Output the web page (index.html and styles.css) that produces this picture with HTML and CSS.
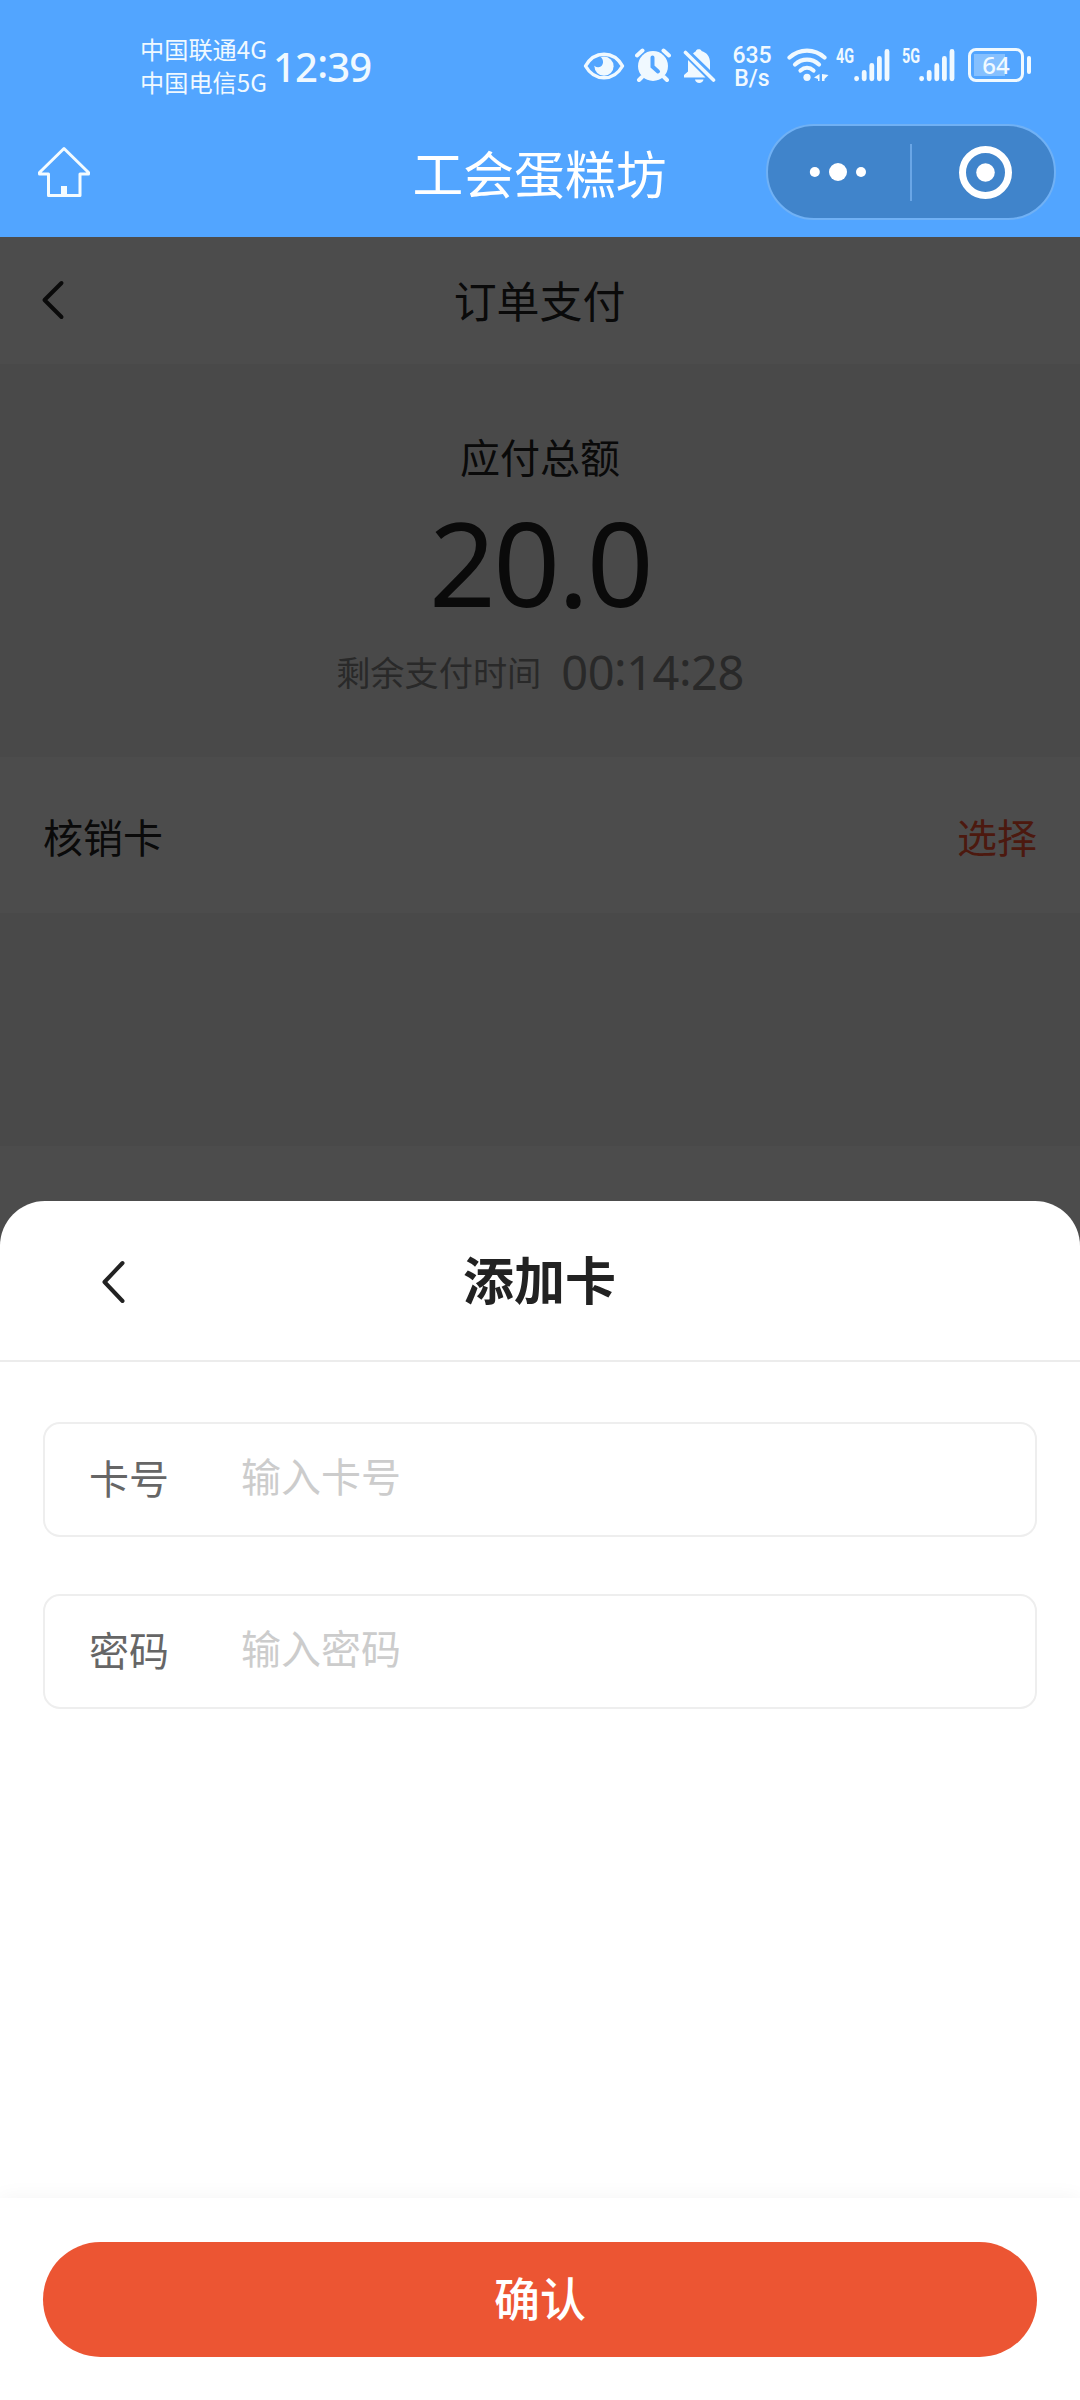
FILE: index.html
```html
<!DOCTYPE html>
<html lang="zh-CN">
<head>
<meta charset="utf-8">
<title>工会蛋糕坊</title>
<link rel="stylesheet" href="styles.css">
</head>
<body>
<div class="screen">
  <header class="topbar">
    <div class="status">
      <div class="carriers"><span>中国联通4G</span><span>中国电信5G</span></div>
      <div class="clock">12<i class="colon">:</i>39</div>
      <div class="status-icons">
        <svg class="eye" width="42" height="30" viewBox="0 0 42 30"><path d="M2.500 15C7 7 14 3.200 21 3.200S35 7 39.500 15C35 23 28 26.800 21 26.800S7 23 2.500 15Z" fill="none" stroke="#f0f9ff" stroke-width="3.400" stroke-linejoin="round"/><circle cx="21" cy="15.200" r="9.600" fill="#f0f9ff"/><path d="M11 9.500 17 5.500C21.500 8.500 21 15.500 15.500 16.200C13 16.500 11 15 9.500 13Z" fill="#52a5ff"/></svg>
        <svg class="alarm" width="36" height="34" viewBox="0 0 36 34"><circle cx="18" cy="18" r="15" fill="#f0f9ff"/><path d="M2 7.500 7.500 2.500M28.500 2.500 34 7.500M7 29 4 32M29 29 32 32" stroke="#f0f9ff" stroke-width="4" stroke-linecap="round"/><path d="M17.500 9.500V18.500L23 23.500" fill="none" stroke="#52a5ff" stroke-width="4" stroke-linecap="round"/></svg>
        <svg class="bell" width="33" height="36" viewBox="0 0 33 36"><path d="M5 12 22.500 29.500H1V27L5 23.500ZM10 5.500C11.500 4 12.500 3.500 13 3C13 .5 18.500 .5 18.500 3C24 4.500 27 9 27 14V22ZM12 31.500H20.500C20 36 12.500 36 12 31.500Z" fill="#f0f9ff"/><path d="M2.500 4.500 30.500 32" stroke="#f0f9ff" stroke-width="3.600" stroke-linecap="round"/></svg>
        <div class="speed"><span>635</span><span>B/s</span></div>
        <svg class="wifi" width="42" height="34" viewBox="0 0 42 34"><g fill="none" stroke="#f0f9ff" stroke-width="4.200" stroke-linecap="round"><path d="M2.500 9.500C12.500 .200 27.500 .200 37.500 9.500"/><path d="M8 16.500C15 10 25 10 32 16.500"/><path d="M13.500 22.500C17.500 19 22.500 19 26.500 22.500"/></g><circle cx="20" cy="29.300" r="3.600" fill="#f0f9ff"/><path d="M32.500 26V33H31V31L27 29.500ZM35 26 41.500 27 37.500 31V33H35Z" fill="#f0f9ff"/></svg>
        <span class="net net-4g">4G</span>
        <svg class="bars" width="36" height="34" viewBox="0 0 36 34"><path d="M2.600 30.300V30.800M10.200 24.500V30.800M17.800 17.500V30.800M25.400 10.500V30.800M33 3.500V30.800" stroke="#f0f9ff" stroke-width="4.800" stroke-linecap="round"/></svg>
        <span class="net net-5g">5G</span>
        <svg class="bars" width="36" height="34" viewBox="0 0 36 34"><path d="M2.600 30.300V30.800M10.200 24.500V30.800M17.800 17.500V30.800M25.400 10.500V30.800M33 3.500V30.800" stroke="#f0f9ff" stroke-width="4.800" stroke-linecap="round"/></svg>
        <div class="battery"><span>64</span></div><div class="nub"></div>
      </div>
    </div>
    <div class="appbar">
      <svg class="home" width="54" height="54" viewBox="0 0 54 54"><path d="M27 3.500 51.500 27.500V29H43V50.500H11.500V29H2.500V27.500Z" fill="none" stroke="#f3fbff" stroke-width="3" stroke-linejoin="round"/><path d="M24 41H30V50H24Z" fill="#f3fbff"/></svg>
      <h1 class="app-title">工会蛋糕坊</h1>
      <div class="capsule">
        <svg width="143" height="92" viewBox="0 0 143 92"><g fill="#fff"><circle cx="46.800" cy="46" r="5"/><circle cx="70" cy="46" r="9"/><circle cx="93" cy="46" r="5"/></g></svg>
        <i class="capsule-line"></i>
        <svg width="141" height="92" viewBox="0 0 141 92"><circle cx="73.500" cy="46.500" r="23" fill="none" stroke="#fff" stroke-width="7"/><circle cx="73.500" cy="46.500" r="9.300" fill="#fff"/></svg>
      </div>
    </div>
  </header>

  <main class="page">
    <div class="navbar">
      <svg class="nav-back" width="30" height="46" viewBox="0 0 30 46"><path d="M24.500 5 7.500 22 24.500 39" fill="none" stroke="#222" stroke-width="4" stroke-linecap="round" stroke-linejoin="round"/></svg>
      <h2 class="nav-title">订单支付</h2>
    </div>
    <section class="total">
      <div class="total-label">应付总额</div>
      <div class="total-amount">20.0</div>
      <div class="remain"><span>剩余支付时间</span><span class="countdown">00<i class="colon">:</i>14<i class="colon">:</i>28</span></div>
    </section>
    <div class="card-row"><span>核销卡</span><span class="pick">选择</span></div>
    <div class="spacer"></div>
    <div class="mask"></div>
  </main>

  <section class="sheet">
    <div class="sheet-head">
      <svg class="sheet-back" width="34" height="50" viewBox="0 0 34 50"><path d="M26.500 7 8.500 26 26.500 45" fill="none" stroke="#222" stroke-width="4" stroke-linecap="round" stroke-linejoin="round"/></svg>
      <h2 class="sheet-title">添加卡</h2>
    </div>
    <div class="form">
      <label class="field"><span class="field-label">卡号</span><span class="placeholder">输入卡号</span></label>
      <label class="field"><span class="field-label">密码</span><span class="placeholder">输入密码</span></label>
    </div>
    <footer class="footer"><button class="confirm">确认</button></footer>
  </section>
</div>
</body>
</html>
```
FILE: styles.css
```css
* { box-sizing: border-box; }
body { margin: 0; font-family: "Noto Sans CJK SC", sans-serif; color: #222; }
h1, h2 { margin: 0; font-weight: 400; }
i { font-style: normal; }
svg { display: block; flex: none; }

.screen { width: 1080px; height: 2400px; display: flex; flex-direction: column; overflow: hidden; background: #fff; }

.topbar { height: 237px; background: #52a5ff; color: #fff; }
.status { height: 124px; display: flex; align-items: flex-start; padding-left: 140px; color: #f0f9ff; }
.carriers { width: 130px; padding-top: 32px; display: flex; flex-direction: column; font-size: 24.200px; line-height: 33px; white-space: nowrap; }
.clock { width: 110px; margin-left: 3px; padding-top: 44px; font: 500 40px/46px "Noto Sans", sans-serif; letter-spacing: -.8px; white-space: nowrap; }
.clock .colon { vertical-align: 4px; line-height: 1px; }
.status-icons { display: flex; align-items: flex-start; margin-left: 200px; padding-top: 48px; }
.eye { margin-top: 3px; }
.alarm { margin-left: 10px; }
.bell { margin-left: 12px; }
.speed { width: 44px; margin: -4px 0 0 14px; display: flex; flex-direction: column; align-items: center; font: 500 23px/23px Roboto, sans-serif; }
.wifi { margin-left: 13px; }
.net { font: 700 20px/20px "Roboto", sans-serif; transform: scaleX(.72); transform-origin: 0 0; }
.net-4g { width: 18px; margin: -2px 0 0 7px; }
.net-5g { width: 17px; margin: -2px 0 0 12px; }
.battery { width: 56px; height: 34px; margin: 0 0 0 13px; border: 3px solid #f0f9ff; border-radius: 8px; display: flex; align-items: center; justify-content: center; font: 500 24px/28px "Noto Sans", sans-serif; background: linear-gradient(#85c0ff, #85c0ff) 3px 3px / 31px 22px no-repeat; }
.nub { width: 4px; height: 18px; margin: 8px 0 0 3px; border-radius: 2px; background: #f0f9ff; }

.appbar { height: 96px; display: flex; align-items: center; padding: 0 24px 0 37px; }
.app-title { flex: 1; margin-left: 222px; font-size: 50.800px; line-height: 96px; text-align: center; }
.capsule { width: 290px; height: 96px; display: flex; align-items: center; border: 2px solid #70b1f5; border-radius: 48px; background: #4084cb; }
.capsule-line { width: 2px; height: 57px; margin-left: -1px; background: #6aa6e6; }

.page { position: relative; height: 964px; background: #fff; }
.navbar { height: 127px; display: flex; align-items: center; padding-left: 37px; }
.nav-title { width: 1006px; padding: 0 61px 4px 0; text-align: center; font-size: 42.900px; line-height: 120px; }
.total { height: 393px; display: flex; flex-direction: column; align-items: center; background: #f5f5f5; }
.total-label { margin-top: 62px; font-size: 40px; line-height: 60px; }
.total-amount { margin-top: 6px; font: 400 117px/140px "Noto Sans", sans-serif; letter-spacing: -2.500px; }
.remain { display: flex; align-items: center; gap: 20px; margin-top: 9px; height: 60px; font-size: 34.200px; color: #8a8a8a; }
.countdown { padding-top: 2px; font: 400 47px/60px "Noto Sans", sans-serif; letter-spacing: -.5px; }
.countdown .colon { vertical-align: 4px; line-height: 1px; }
.card-row { height: 156px; display: flex; justify-content: space-between; align-items: center; padding: 2px 43px 0; font-size: 40px; }
.pick { color: #ff5533; }
.spacer { height: 233px; background: #f5f5f5; }
.mask { position: absolute; inset: 0 0 -60px; background: rgba(0, 0, 0, .7); }

.sheet { position: relative; flex: 1; display: flex; flex-direction: column; background: #fff; border-radius: 45px 45px 0 0; }
.sheet-head { height: 161px; display: flex; align-items: center; padding-left: 96px; border-bottom: 2px solid #ececec; }
.sheet-title { flex: 1; padding: 0 131px 6px 0; text-align: center; font-size: 51px; line-height: 150px; font-weight: 700; }
.form { flex: 1; padding: 60px 43px 0; display: flex; flex-direction: column; gap: 57px; }
.field { height: 115px; display: flex; align-items: center; border: 2px solid #eee; border-radius: 17px; padding: 0 0 6px 44px; font-size: 40px; }
.field-label { width: 152px; color: #666; }
.placeholder { color: #ccc; margin-top: -4px; }
.footer { height: 202px; padding: 44px 43px; background: #fff; box-shadow: 0 0 20px rgba(0, 0, 0, .05); }
.confirm { display: block; width: 994px; height: 115px; padding: 0 0 8px; border: 0; border-radius: 58px; background: #ec5533; color: #fff; font: 500 46px/106px "Noto Sans CJK SC", sans-serif; }
```
